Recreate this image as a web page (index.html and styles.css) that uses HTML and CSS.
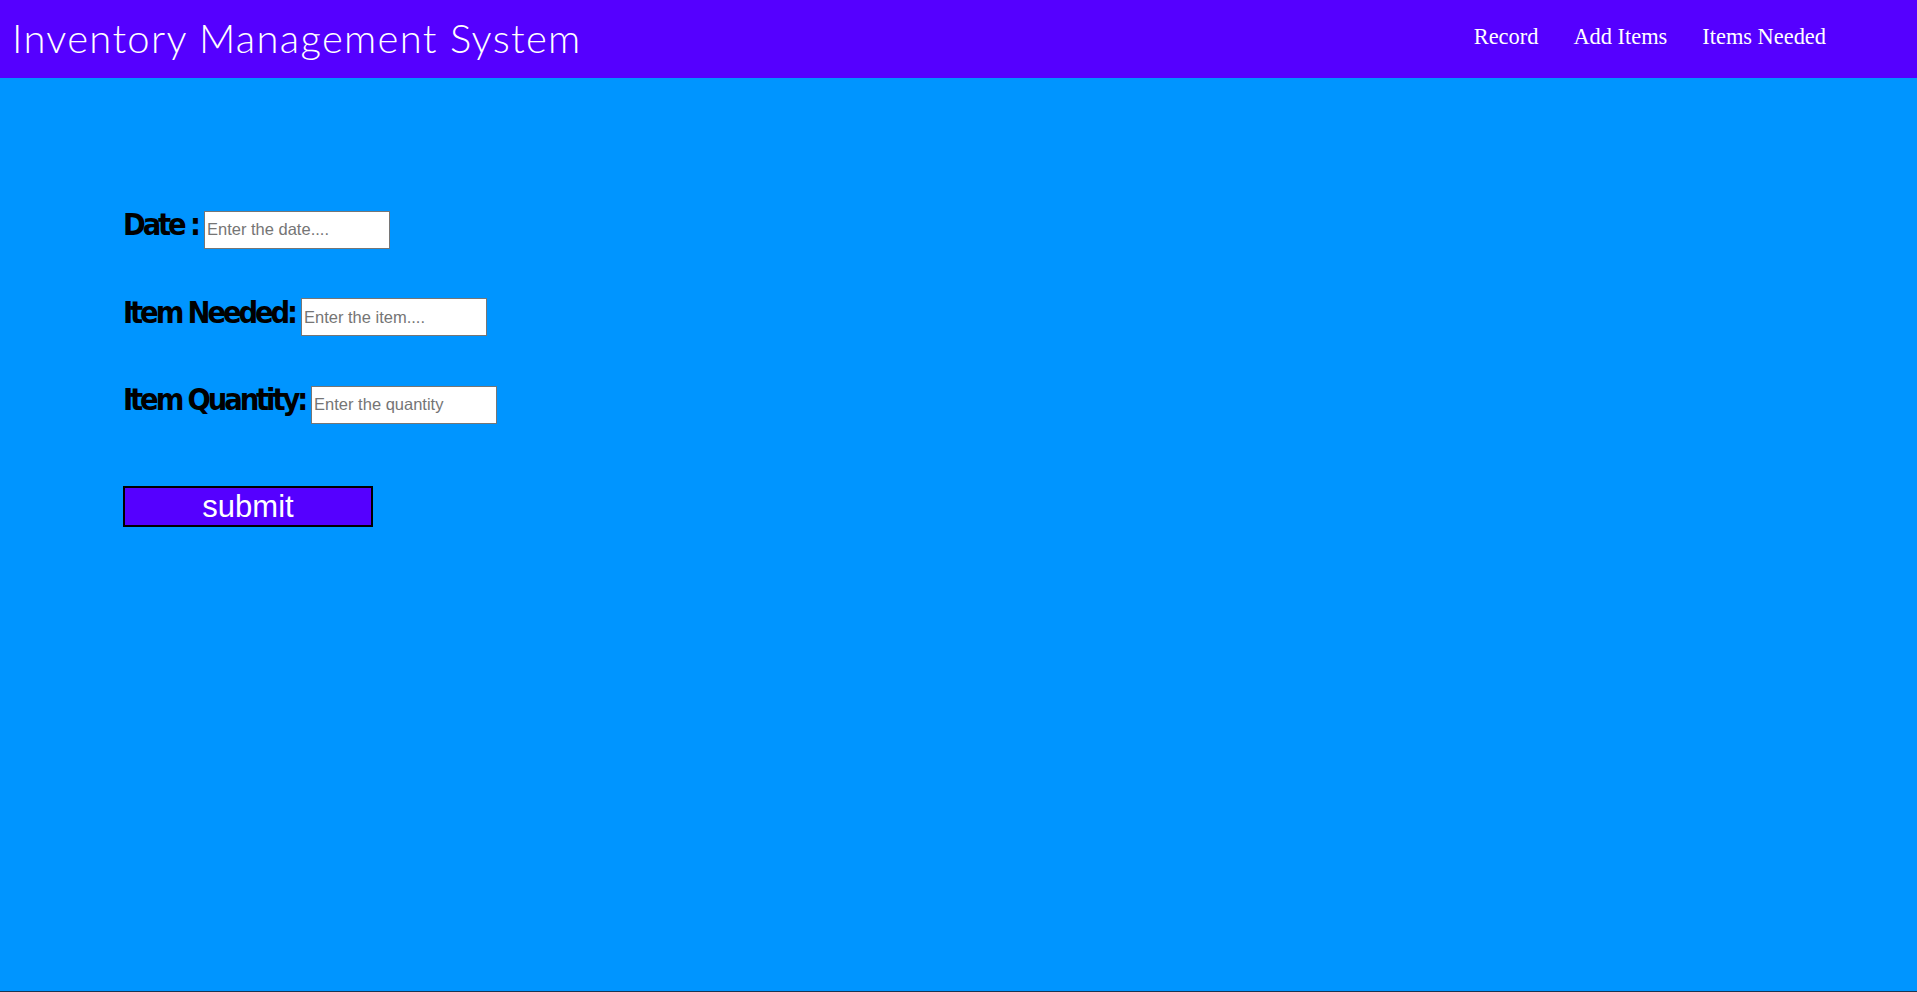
FILE: index.html
```html
<!DOCTYPE html>
<html lang="en">
<head>
<meta charset="utf-8">
<title>Inventory Management System</title>
<link rel="stylesheet" href="styles.css">
</head>
<body>
<div class="page">
  <header class="topbar">
    <div class="brand">Inventory Management System</div>
    <nav class="nav">
      <a class="nav-link" href="#">Record</a>
      <a class="nav-link" href="#">Add Items</a>
      <a class="nav-link" href="#">Items Needed</a>
    </nav>
  </header>
  <main class="content">
    <form class="needed-form">
      <div class="row"><label class="label" for="d">Date :</label><input class="field" id="d" type="text" placeholder="Enter the date...."></div>
      <div class="row"><label class="label" for="i">Item Needed:</label><input class="field" id="i" type="text" placeholder="Enter the item...."></div>
      <div class="row"><label class="label" for="q">Item Quantity:</label><input class="field" id="q" type="text" placeholder="Enter the quantity"></div>
      <div class="actions"><button class="submit" type="button">submit</button></div>
    </form>
  </main>
</div>
</body>
</html>
```
FILE: styles.css
```css
html, body {
  margin: 0;
  padding: 0;
  height: 100%;
}
body {
  background: #0095ff;
}
.page {
  height: 100vh;
  box-sizing: border-box;
  display: flex;
  flex-direction: column;
  border-bottom: 1px solid #1c3550;
}
.topbar {
  height: 78px;
  flex: none;
  background: #5500ff;
  display: flex;
  justify-content: space-between;
  align-items: center;
}
.brand {
  padding-left: 12px;
  font-family: Lato, "Open Sans", sans-serif;
  font-weight: 300;
  font-size: 40px;
  letter-spacing: 1.3px;
  color: #ffffff;
  line-height: 1;
  margin-top: -2px;
}
.nav {
  display: flex;
  gap: 35px;
  padding-right: 91px;
  margin-top: -4px;
}
.nav-link {
  font-family: "Liberation Serif", "Times New Roman", serif;
  font-size: 22.4px;
  color: #ffffff;
  text-decoration: none;
}
.content {
  flex: 1;
  padding: 129px 0 0 123px;
}
.needed-form {
  display: flex;
  flex-direction: column;
  align-items: flex-start;
}
.row {
  display: flex;
  align-items: baseline;
  gap: 6px;
  height: 87.5px;
}
.label {
  font-family: Impact, "DejaVu Sans Condensed", sans-serif;
  font-weight: 700;
  font-size: 30.5px;
  letter-spacing: -3.1px;
  color: #000000;
}
.field {
  width: 186px;
  height: 38px;
  box-sizing: border-box;
  border: 1px solid #767676;
  padding: 1px 2px;
  background: #ffffff;
  font-family: "Liberation Sans", Arial, sans-serif;
  font-size: 16.5px;
  color: #000;
}
.field::placeholder {
  color: #757575;
}
.actions {
  margin-top: 16px;
}
.submit {
  width: 250px;
  height: 41px;
  box-sizing: border-box;
  border: 2px solid #000000;
  background: #5500ff;
  color: #ffffff;
  font-family: "Liberation Sans", Arial, sans-serif;
  font-size: 31px;
  line-height: 1;
  padding: 0;
}
```
